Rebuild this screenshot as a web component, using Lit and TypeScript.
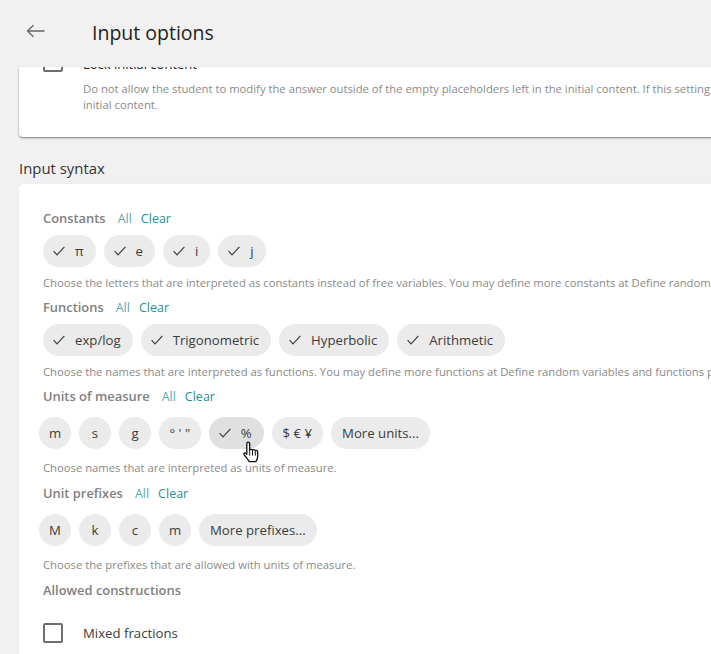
import { LitElement, html, css, svg } from "lit";
import { customElement } from "lit/decorators.js";

const check = html`<svg class="check" viewBox="0 0 12 10" width="12" height="10"><path d="M.6 5.2 L4 8.8 L11.4.8" fill="none" stroke="#3c3c3c" stroke-width="1.15"/></svg>`;

const hand = svg`<path d="M5.2 1.2c.9 0 1.5.7 1.5 1.6v6.1c.2-.7 2.6-1 2.8.4.3-1 2.5-1 2.8.5.5-.8 2.3-.6 2.4.9v4.8c0 2.3-1.3 4-1.8 5.1H6.2c-.6-1.2-1.7-2.5-3-4.2-.8-1-1.9-2.2-2.2-3-.4-1.1.8-2 1.8-1.2l1 1V2.8c0-.9.6-1.6 1.4-1.6z" fill="#fff" stroke="#111" stroke-width="1.3" stroke-linejoin="round"/><path d="M9.5 10v4.6M12.3 10.4v4.2M6.7 9v5.6" stroke="#111" stroke-width="1" fill="none"/>`;

type Chip = { t: string; on?: boolean; hover?: boolean; kind?: string };
type Group = { label: string; chips: Chip[]; help: string; inset?: boolean };

const groups: Group[] = [
  {
    label: "Constants",
    chips: [{ t: "π", on: true }, { t: "e", on: true }, { t: "i", on: true }, { t: "j", on: true }],
    help: "Choose the letters that are interpreted as constants instead of free variables. You may define more constants at Define random variables and functions page.",
  },
  {
    label: "Functions",
    chips: [{ t: "exp/log", on: true }, { t: "Trigonometric", on: true }, { t: "Hyperbolic", on: true }, { t: "Arithmetic", on: true }],
    help: "Choose the names that are interpreted as functions. You may define more functions at Define random variables and functions page.",
  },
  {
    label: "Units of measure",
    inset: true,
    chips: [
      { t: "m", kind: "round" },
      { t: "s", kind: "round" },
      { t: "g", kind: "round" },
      { t: "° ' \"", kind: "compact" },
      { t: "%", on: true, hover: true },
      { t: "$ € ¥" },
      { t: "More units..." },
    ],
    help: "Choose names that are interpreted as units of measure.",
  },
  {
    label: "Unit prefixes",
    inset: true,
    chips: [
      { t: "M", kind: "round" },
      { t: "k", kind: "round" },
      { t: "c", kind: "round" },
      { t: "m", kind: "round" },
      { t: "More prefixes..." },
    ],
    help: "Choose the prefixes that are allowed with units of measure.",
  },
];

@customElement("app-root")
export class AppRoot extends LitElement {
  static styles = css`
    :host {
      display: block;
      width: 711px;
      height: 654px;
      overflow: hidden;
      position: relative;
      background: #f1f1f1;
      font-family: "Open Sans", "Noto Sans", sans-serif;
      color: #333;
    }
    .header {
      height: 67px;
      display: flex;
      align-items: center;
      background: #f1f1f1;
    }
    .back {
      margin-left: 26px;
      width: 19px;
      height: 14px;
      margin-top: -6px;
      flex: none;
    }
    .title {
      margin-left: 47px;
      margin-top: -2px;
      font-size: 19.5px;
      font-weight: 500;
      color: #1f1f1f;
    }
    .scroll {
      width: 900px;
      margin-left: 19px;
    }
    .card {
      background: #fff;
      border-radius: 0 0 4px 4px;
      box-shadow: 0 1px 2px rgba(0, 0, 0, 0.5);
    }
    .top {
      height: 70px;
      overflow: hidden;
      position: relative;
    }
    .top-row {
      display: flex;
      gap: 20px;
      padding-left: 24px;
      margin-top: -10px;
      align-items: flex-start;
    }
    .box {
      box-sizing: border-box;
      width: 20px;
      height: 20px;
      border: 2px solid #6e6e6e;
      border-radius: 2px;
      flex: none;
      background: #fff;
    }
    .top-row .box { margin-top: -5px; }
    .top-label {
      font-size: 13px;
      color: #222;
      line-height: 14px;
      height: 9px;
    }
    .top-help {
      margin: 9px 0 0 64px;
      font-size: 11.27px;
      line-height: 16px;
      color: #8a8a8a;
      white-space: nowrap;
    }
    h2 {
      margin: 21px 0 0;
      height: 26px;
      font-size: 14.9px;
      line-height: 20px;
      font-weight: 400;
      color: #333;
    }
    .main {
      border-radius: 4px 4px 0 0;
      padding: 24px 24px 0;
      height: 480px;
      box-shadow: 0 0 1px rgba(0, 0, 0, 0.12);
    }
    .head {
      display: flex;
      align-items: center;
      height: 20px;
      font-size: 12.9px;
      font-weight: 600;
      color: #808080;
    }
    .links {
      margin-left: 12px;
      display: flex;
      gap: 9px;
      font-weight: 400;
      font-size: 12.5px;
      color: #2a8f98;
    }
    .links span:first-child { color: #5aa9b0; }
    .chips {
      display: flex;
      gap: 8px;
      margin-top: 7px;
    }
    .chips.inset { margin-left: -4px; margin-top: 11px; }
    .chip {
      display: flex;
      align-items: center;
      justify-content: center;
      box-sizing: border-box;
      height: 32px;
      min-width: 32px;
      padding: 0 11px;
      border-radius: 16px;
      background: #ebebeb;
      font-size: 13.2px;
      color: #3c3c3c;
      white-space: nowrap;
    }
    .chip.hover { background: #e0e0e0; }
    .chip.on { padding: 0 12px 0 10px; gap: 10px; }
    .chip.round { padding: 0; width: 32px; }
    .chip.compact { padding: 0 10.5px; }
    .check { flex: none; }
    .help {
      margin-top: 8px;
      height: 16px;
      font-size: 11.27px;
      line-height: 16px;
      color: #8a8a8a;
      white-space: nowrap;
    }
    .chips.inset + .help { margin-top: 11px; }
    .group { height: 89px; }
    .group.tall { height: 97px; }
    .mixed {
      display: flex;
      align-items: center;
      gap: 20px;
      margin: 23px 0 0;
      font-size: 13.2px;
      color: #3c3c3c;
    }
    .cursor {
      position: absolute;
      left: 243px;
      top: 441px;
      width: 18px;
      height: 24px;
    }
  `;

  render() {
    return html`
      <div class="header">
        <svg class="back" viewBox="0 0 19 14"><path d="M18.5 7H1.5M7.5 1.2 1.5 7l6 5.8" fill="none" stroke="#666" stroke-width="1.3"/></svg>
        <div class="title">Input options</div>
      </div>
      <div class="scroll">
        <div class="card top">
          <div class="top-row">
            <div class="box"></div>
            <div class="top-label">Lock initial content</div>
          </div>
          <div class="top-help">Do not allow the student to modify the answer outside of the empty placeholders left in the initial content. If this setting is turned on, the student can only edit the<br />initial content.</div>
        </div>
        <h2>Input syntax</h2>
        <div class="card main">
          ${groups.map(
            (g) => html`
              <div class="group ${g.inset ? "tall" : ""}">
                <div class="head">${g.label}<div class="links"><span>All</span><span>Clear</span></div></div>
                <div class="chips ${g.inset ? "inset" : ""}">
                  ${g.chips.map(
                    (c) => html`<div class="chip ${c.on ? "on" : ""} ${c.hover ? "hover" : ""} ${c.kind ?? ""}">${c.on ? check : ""}<span>${c.t}</span></div>`
                  )}
                </div>
                <div class="help">${g.help}</div>
              </div>
            `
          )}
          <div class="head">Allowed constructions</div>
          <div class="mixed"><div class="box"></div>Mixed fractions</div>
        </div>
      </div>
      <svg class="cursor" viewBox="0 0 18 24">${hand}</svg>
    `;
  }
}
